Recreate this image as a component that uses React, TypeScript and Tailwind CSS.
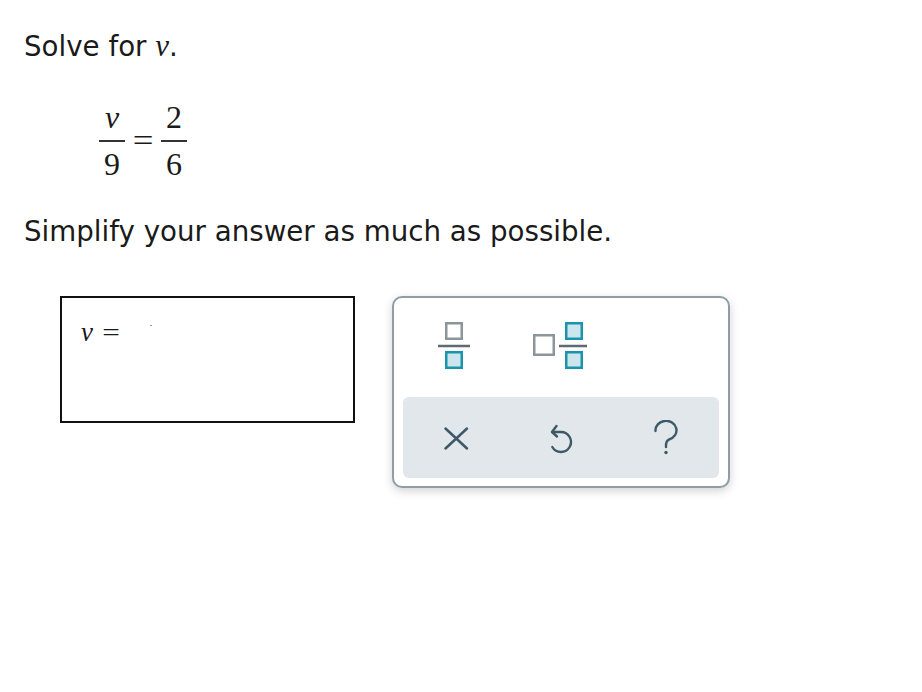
import React from 'react'

const sans = { fontFamily: '"DejaVu Sans", Verdana, sans-serif' }
const serif = { fontFamily: '"Liberation Serif", "Times New Roman", serif' }

function Frac({ top, bottom }: { top: React.ReactNode; bottom: React.ReactNode }) {
  return (
    <span className="inline-flex flex-col items-center">
      <span className="h-[40px] leading-[40px] mb-[3px]">{top}</span>
      <span className="block h-[2px] w-[26px] bg-[#333]" />
      <span className="h-[40px] leading-[40px] mt-[2px]">{bottom}</span>
    </span>
  )
}

function FracIcon() {
  return (
    <svg width="34" height="53" viewBox="0 0 34 53">
      <rect x="9.25" y="4.25" width="15.5" height="15.5" fill="none" stroke="#8b969c" strokeWidth="2.5" />
      <line x1="1" y1="27" x2="33" y2="27" stroke="#5f6b70" strokeWidth="2.5" />
      <rect x="9.25" y="33.25" width="15.5" height="15.5" fill="#cde6ee" stroke="#1895ad" strokeWidth="2.5" />
    </svg>
  )
}

function MixedIcon() {
  return (
    <svg width="58" height="53" viewBox="0 0 58 53">
      <rect x="3.25" y="16.25" width="19.5" height="19.5" fill="none" stroke="#8b969c" strokeWidth="2.5" />
      <rect x="35.25" y="4.25" width="15.5" height="15.5" fill="#cde6ee" stroke="#1895ad" strokeWidth="2.5" />
      <line x1="28" y1="27" x2="56" y2="27" stroke="#5f6b70" strokeWidth="2.5" />
      <rect x="35.25" y="33.25" width="15.5" height="15.5" fill="#cde6ee" stroke="#1895ad" strokeWidth="2.5" />
    </svg>
  )
}

export default function App() {
  return (
    <div className="min-h-[692px] bg-white text-[#1a1a1a] pl-6 pt-[29px]" style={sans}>
      <p className="h-[36px] text-[27.7px] leading-[36px]">
        Solve for{' '}
        <i className="text-[31px] leading-none" style={serif}>
          v
        </i>
        .
      </p>

      {/* equation */}
      <div className="mt-[32px] ml-[75px] flex items-center text-[32px]" style={serif}>
        <Frac top={<i>v</i>} bottom="9" />
        <span className="inline-block mx-[9px] scale-x-[1.15] leading-none mb-[1px]">=</span>
        <Frac top="2" bottom="6" />
      </div>

      <p className="mt-[30px] text-[27.7px] leading-[36px]">Simplify your answer as much as possible.</p>

      <div className="mt-[46px] flex items-start">
        {/* answer box */}
        <div className="ml-[36px] w-[295px] h-[127px] border-2 border-[#111] px-[19px] pt-[21px] relative">
          <span className="text-[27px] leading-none" style={serif}>
            <i>v</i>
            <span className="inline-block ml-[11px] scale-x-[1.25] text-[25px]">=</span>
          </span>
          <span className="absolute left-[88px] top-[27px] w-[2px] h-[1px] bg-[#999]" />
        </div>

        {/* keypad */}
        <div className="ml-[37px] w-[338px] h-[192px] border-2 border-[#8f9ea6] rounded-[10px] bg-white shadow-[0_3px_10px_rgba(0,0,0,0.18)] px-[9px]">
          <div className="flex items-start h-[99px] pt-[21px]">
            <button className="ml-[34px]">
              <FracIcon />
            </button>
            <button className="ml-[60px]">
              <MixedIcon />
            </button>
          </div>
          <div className="h-[81px] bg-[#e1e7ea] rounded-[6px] grid grid-cols-3 items-center">
            <div className="flex justify-center">
              <svg width="26" height="26" viewBox="0 0 26 26">
                <path d="M2.5 3.5L24 23.5M24 3.5L2.5 23.5" stroke="#3d5866" strokeWidth="2.5" strokeLinecap="round" />
              </svg>
            </div>
            <div className="flex justify-center">
              <svg width="30" height="34" viewBox="0 0 30 34">
                <path
                  d="M10.5 5L6 11L11 15.5"
                  fill="none"
                  stroke="#3d5866"
                  strokeWidth="2.4"
                  strokeLinecap="round"
                  strokeLinejoin="round"
                />
                <path
                  d="M6.5 11L15 11A10 10 0 1 1 6.3 26"
                  fill="none"
                  stroke="#3d5866"
                  strokeWidth="2.4"
                  strokeLinecap="round"
                />
              </svg>
            </div>
            <div className="flex justify-center">
              <svg width="26" height="36" viewBox="0 0 26 36">
                <path
                  d="M2.5 11A10.5 9.5 0 1 1 16 19.5Q13 21 13 25V27"
                  fill="none"
                  stroke="#3d5866"
                  strokeWidth="2.4"
                  strokeLinecap="round"
                />
                <circle cx="13" cy="32.5" r="1.7" fill="#3d5866" />
              </svg>
            </div>
          </div>
        </div>
      </div>
    </div>
  )
}
